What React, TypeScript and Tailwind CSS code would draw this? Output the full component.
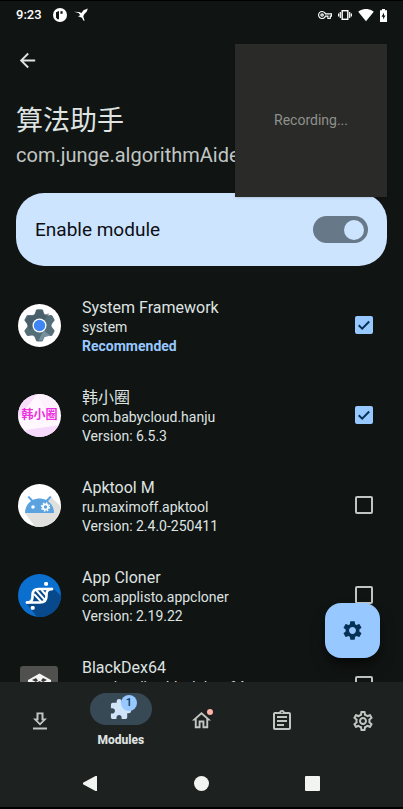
import React from "react";
import {
  MdArrowBack,
  MdExtension,
  MdOutlineAssignment,
  MdOutlineHome,
  MdOutlineSettings,
  MdOutlineVpnKey,
  MdSettings,
  MdSignalWifi4Bar,
} from "react-icons/md";

function SystemIcon() {
  return (
    <svg viewBox="0 0 43 43" className="size-full" aria-hidden="true">
      <circle cx="21.5" cy="21.5" r="21.5" fill="#fff" />
      <g transform="translate(21.5 21.5)">
        <g fill="#546e7a">
          <circle r="12" />
          {[0, 60, 120, 180, 240, 300].map((angle) => (
            <path key={angle} transform={`rotate(${angle})`} d="M-5.500-10L-3.400-15.200Q-3-16-2-16H2Q3-16 3.400-15.200L5.500-10Z" />
          ))}
        </g>
        <path d="M-14-5L-11-10L-4-11L-3-16H3L4-11L10-12L0 0L-10 4Z" fill="#455a64" opacity=".7" />
        <path d="M4 5L11 10L4 12L3 15H-1Z" fill="#78909c" />
        <circle r="7" fill="#fff" />
        <circle r="5.700" fill="#3f86f5" />
      </g>
    </svg>
  );
}

function HanjuIcon() {
  return (
    <span className="relative flex size-full items-center justify-center overflow-hidden rounded-full bg-[#fff9ff]">
      <svg viewBox="0 0 43 43" className="absolute inset-0 size-full" aria-hidden="true">
        <path d="M0 0H19L0 25Z" fill="#f9dcfb" />
        <path d="M19 0L28 18L43 12V0Z" fill="#fdf1fe" />
        <path d="M0 37L43 31V43H0Z" fill="#f7d9fb" />
      </svg>
      <span className="relative text-[12px] leading-none font-bold text-[#ee2fe0]">韩小圈</span>
    </span>
  );
}

function ApktoolIcon() {
  return (
    <svg viewBox="0 0 43 43" className="size-full" aria-hidden="true">
      <circle cx="21.5" cy="21.5" r="21.500" fill="#fff" />
      <path d="M33 13L42.500 22A21.500 21.500 0 0 1 17 42.500L7 29Z" fill="#e0e0de" />
      <path d="M7 29C7 24 9.500 19.500 13 17L9.500 13L11 12L15 16C19 14 24 14 28 16L32 12L33.500 13L30 17.200C34 20 36 24 36 29Z" fill="#5aa2e0" />
      <circle cx="15" cy="23" r="1.800" fill="#fff" />
      <circle cx="27.500" cy="23" r="2.600" fill="none" stroke="#fff" strokeWidth="1.800" />
      <circle cx="27.500" cy="23" r="4" fill="none" stroke="#fff" strokeWidth="1.400" strokeDasharray="1.570 1.570" />
    </svg>
  );
}

function ClonerIcon() {
  return (
    <svg viewBox="0 0 43 43" className="size-full" aria-hidden="true">
      <circle cx="21.5" cy="21.5" r="21.500" fill="#0b6fcf" />
      <path d="M35 14L43 22A21.500 21.500 0 0 1 19 43L8 29L15 28L14 18Z" fill="#07498a" />
      <g fill="none" stroke="#fff" strokeWidth="2.600" strokeLinecap="round" strokeLinejoin="round">
        <path d="M34 15H20.500Q14.500 15 14.500 21V23Q14.500 28.500 9 28.500" />
        <path d="M9 28.500H22Q28.500 28.500 28.500 22V20.500Q28.500 15 34 15" />
        <path d="M16.500 20.500L23 27.500M18.500 16.500L26.500 25.500M24 16.500L28 21" strokeWidth="1.900" />
      </g>
      <rect x="26.200" y="8" width="3.800" height="3.800" rx="1.200" fill="#fff" />
      <rect x="12.800" y="32" width="3.800" height="3.800" rx="1.200" fill="#fff" />
    </svg>
  );
}

function BlackDexIcon() {
  return (
    <svg viewBox="0 0 43 43" className="size-full" aria-hidden="true">
      <rect x="2" y="2" width="38" height="38" rx="3" fill="#50514f" />
      <path d="M21.500 9.500L33 16V28L21.500 34.500L10 28V16Z" fill="#f5f5f5" />
      <path d="M14 16L18 14L20 16.500L18 18ZM29 16L25 14L23 16.500L25 18ZM18 19L21.500 17L25 19L21.500 21Z" fill="#3b3c3a" />
    </svg>
  );
}

interface AppEntry {
  name: string;
  pkg: string;
  note: string;
  recommended?: boolean;
  checked: boolean;
  icon: React.ReactNode;
}

const apps: AppEntry[] = [
  { name: "System Framework", pkg: "system", note: "Recommended", recommended: true, checked: true, icon: <SystemIcon /> },
  { name: "韩小圈", pkg: "com.babycloud.hanju", note: "Version: 6.5.3", checked: true, icon: <HanjuIcon /> },
  { name: "Apktool M", pkg: "ru.maximoff.apktool", note: "Version: 2.4.0-250411", checked: false, icon: <ApktoolIcon /> },
  { name: "App Cloner", pkg: "com.applisto.appcloner", note: "Version: 2.19.22", checked: false, icon: <ClonerIcon /> },
  { name: "BlackDex64", pkg: "top.niunaijun.blackdexa64", note: "Version: 3.2.0", checked: false, icon: <BlackDexIcon /> },
];

function StatusBar() {
  return (
    <div className="flex h-7 shrink-0 items-center px-4 text-white">
      <span className="text-[13px] leading-4 font-medium">9:23</span>
      <svg viewBox="0 0 14 14" className="ml-[11px] size-3.5" aria-hidden="true">
        <circle cx="7" cy="7" r="7" fill="#fff" />
        <path d="M3 4.200L6 3V11.300H4.400L3 9.500ZM7.400 3.200H9.600V5.800H7.400Z" fill="#101413" />
      </svg>
      <svg viewBox="0 0 14 14" className="ml-[7px] size-3.5" aria-hidden="true">
        <path d="M0 3.800L5 3.900L7.400 5L9.500 2.200L13.800 .5L12.800 3.500L10 6.500L9.300 8.500L10.600 12.800L9.300 12.500L8 9.800L4 8.200L6.200 7.200L4.700 5Z" fill="#fff" />
      </svg>
      <div className="ml-auto flex items-center">
        <MdOutlineVpnKey className="size-3.5" />
        <svg viewBox="0 0 14 14" className="ml-1.5 size-3.5" aria-hidden="true">
          <rect x="4.200" y="2.700" width="5.600" height="8.600" fill="none" stroke="#fff" strokeWidth="1.400" />
          <path d="M2.300 4V10M11.700 4V10M.6 5.500V8.500M13.400 5.500V8.500" stroke="#fff" strokeWidth="1.200" />
        </svg>
        <MdSignalWifi4Bar className="ml-1.5 size-4" />
        <svg viewBox="0 0 7 13" className="ml-1.5 h-[13px] w-[7px]" aria-hidden="true">
          <path d="M2 0H5V1.300H7V13H0V1.300H2Z" fill="#fff" />
          <path d="M4 3.500L1.500 7.700H3.100V10.500L5.500 6.400H4Z" fill="#101413" />
        </svg>
      </div>
    </div>
  );
}

function ModuleSwitch() {
  return (
    <label className="flex h-[73px] items-center justify-between rounded-[28px] bg-[#cde4ff] px-[19px] text-[19px] leading-6 text-[#0c0f12]">
      Enable module
      <span className="flex">
        <input type="checkbox" role="switch" defaultChecked className="peer sr-only" />
        <span className="flex h-[27px] w-[55px] items-center justify-start rounded-full bg-[#677888] px-1 peer-checked:justify-end">
          <span className="size-5 rounded-full bg-[#cde4ff]" />
        </span>
      </span>
    </label>
  );
}

function AppRow({ app }: { app: AppEntry }) {
  return (
    <li>
      <label className="flex h-[90px] items-center pr-[30px] pl-[18px]">
        <span className="size-[43px] shrink-0">{app.icon}</span>
        <span className="ml-[21px] flex min-w-0 flex-1 flex-col pt-0.5 text-[#dfe3e1]">
          <span className="text-[16px] leading-5">{app.name}</span>
          <span className="text-[14px] leading-[19px]">{app.pkg}</span>
          <span className={app.recommended ? "text-[14px] leading-[18px] font-bold text-[#97c8ff]" : "text-[14px] leading-[18px]"}>
            {app.note}
          </span>
        </span>
        <span className="grid size-[18px] shrink-0">
          <input
            type="checkbox"
            defaultChecked={app.checked}
            className="peer col-start-1 row-start-1 size-[18px] appearance-none rounded-xs border-2 border-[#c1c6c3] checked:border-[#97c8ff] checked:bg-[#97c8ff]"
          />
          <svg viewBox="0 0 18 18" className="pointer-events-none invisible col-start-1 row-start-1 size-[18px] peer-checked:visible" aria-hidden="true">
            <path d="M3.700 9.200L7.200 12.600L14.200 5.500" fill="none" stroke="#063256" strokeWidth="2" />
          </svg>
        </span>
      </label>
    </li>
  );
}

function DownloadIcon() {
  return (
    <svg viewBox="0 0 24 24" className="size-6" fill="currentColor" aria-hidden="true">
      <path d="M15.500 9.500V3.500H8.500V9.500H5L12 16.500L19 9.500ZM10.500 11.300V5.300H13.500V11.300H14.800L12 14.100L9.200 11.300ZM5 18.500H19V20.500H5Z" />
    </svg>
  );
}

function BottomNav() {
  const tab = "flex items-center justify-center";
  return (
    <nav className="grid h-[77px] shrink-0 grid-cols-5 text-[#c1c6c3]">
      <button type="button" aria-label="Repository" className={tab}>
        <DownloadIcon />
      </button>
      <button type="button" aria-current="page" className="flex flex-col items-center pt-[11px]">
        <span className="relative flex h-8 w-[62px] items-center justify-center rounded-full bg-[#384956] text-[#d0e4f9]">
          <MdExtension className="size-[23px]" />
          <span className="absolute top-0.5 left-[31px] flex size-4 items-center justify-center rounded-full bg-[#97c8ff] text-[11px] leading-4 font-medium text-[#063256]">
            1
          </span>
        </span>
        <span className="mt-[7px] text-[12px] leading-4 font-extrabold text-[#dfe3e1]">Modules</span>
      </button>
      <button type="button" aria-label="Home" className={tab}>
        <span className="relative">
          <MdOutlineHome className="size-[23px]" />
          <span className="absolute top-0 right-0 size-1.5 rounded-full bg-[#ffb4a4]" />
        </span>
      </button>
      <button type="button" aria-label="Logs" className={tab}>
        <MdOutlineAssignment className="size-6" />
      </button>
      <button type="button" aria-label="Settings" className={tab}>
        <MdOutlineSettings className="size-6" />
      </button>
    </nav>
  );
}

function SystemNav() {
  return (
    <div className="flex h-12 shrink-0 items-center justify-center gap-24 text-[#f1f4f1]">
      <button type="button" aria-label="Back">
        <svg viewBox="0 0 15 15" className="size-[15px]" fill="currentColor" aria-hidden="true">
          <path d="M14 0V15H12.500L0 8.200V6.800L12.500 0Z" />
        </svg>
      </button>
      <button type="button" aria-label="Home screen" className="size-[15px] rounded-full bg-[#f1f4f1]" />
      <button type="button" aria-label="Recent apps" className="size-[15px] rounded-[1px] bg-[#f1f4f1]" />
    </div>
  );
}

export default function App() {
  return (
    <div className="relative flex h-screen flex-col border-t border-b-2 border-black bg-[#101413] font-['Roboto','Noto_Sans_CJK_SC',sans-serif]">
      <StatusBar />
      <main className="relative flex min-h-0 flex-1 flex-col overflow-hidden">
        <header className="px-4 pt-5">
          <button type="button" aria-label="Back" className="block text-[#dfe3e1]">
            <MdArrowBack className="size-[23px]" />
          </button>
          <h1 className="mt-[29px] text-[27px] leading-10 text-[#dfe3e1]">算法助手</h1>
          <p className="mt-0.5 text-[20px] leading-6 text-[#c1c6c3]">com.junge.algorithmAide</p>
        </header>
        <div className="mt-[26px] px-4">
          <ModuleSwitch />
        </div>
        <ul className="mt-3.5">
          {apps.map((app) => (
            <AppRow key={app.pkg} app={app} />
          ))}
        </ul>
        <button
          type="button"
          aria-label="Module settings"
          className="absolute right-[23px] bottom-6 flex size-[55px] items-center justify-center rounded-2xl bg-[#97c8ff] text-[#063256] shadow-lg shadow-black/50"
        >
          <MdSettings className="size-[23px]" />
        </button>
      </main>
      <footer className="flex shrink-0 flex-col bg-[#1d2120]">
        <BottomNav />
        <SystemNav />
      </footer>
      <div className="absolute top-[43px] right-4 flex h-[153px] w-[152px] items-center justify-center bg-[#2a2b28] text-[14px] text-[#8f908d] shadow-sm">
        Recording...
      </div>
    </div>
  );
}
